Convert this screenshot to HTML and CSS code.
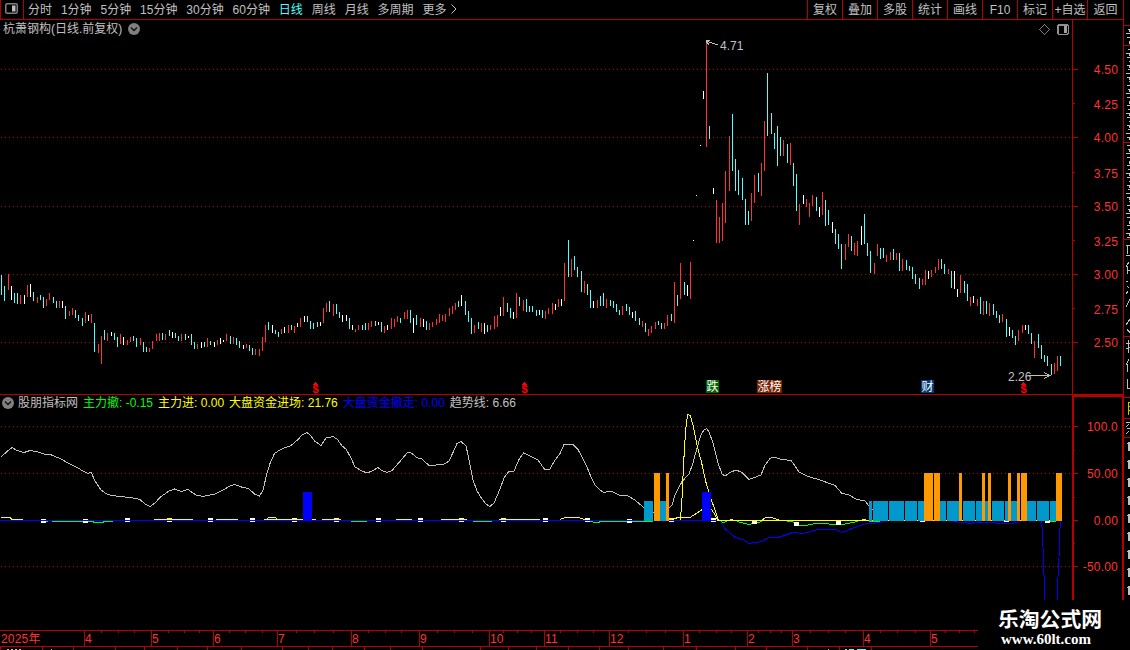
FILE: index.html
```html
<!DOCTYPE html>
<html lang="zh-CN">
<head>
  <meta charset="UTF-8">
  <title>杭萧钢构 - 日线</title>
  <link rel="stylesheet" href="styles.css">
</head>
<body>
<div class="app">
  <div class="main">

    <!-- TOOLBAR -->
    <div class="toolbar">
      <div class="panel-toggle">
        <svg width="13" height="11" viewBox="0 0 13 11"><rect x=".75" y=".75" width="11.5" height="9.5" rx="1.5" fill="none" stroke="#808080" stroke-width="1.5"/><rect x="7" y="2.5" width="3.5" height="6" fill="#c0c0c0"/></svg>
      </div>
      <div class="periods">
        <span>分时</span><span>1分钟</span><span>5分钟</span><span>15分钟</span><span>30分钟</span><span>60分钟</span><span class="active">日线</span><span>周线</span><span>月线</span><span>多周期</span><span>更多</span>
        <svg class="more" width="6" height="10" viewBox="0 0 6 10"><path d="M.5 .5L5 5L.5 9.5" fill="none" stroke="#c0c0c0"/></svg>
      </div>
      <div class="tools">
        <span>复权</span><span>叠加</span><span>多股</span><span>统计</span><span>画线</span><span>F10</span><span>标记</span><span>+自选</span><span class="back">返回</span>
      </div>
    </div>

    <!-- PRICE CHART -->
    <div class="price">
      <div class="title"><span>杭萧钢构(日线.前复权)</span>
        <svg width="12" height="12" viewBox="0 0 12 12"><circle cx="6" cy="6" r="6" fill="#808080"/><path d="M3 4.5L6 7.5L9 4.5" fill="none" stroke="#111" stroke-width="1.4"/></svg>
      </div>
      <svg class="chart" width="1123" height="375" viewBox="0 20 1123 375">
        <path class="grid" d="M1 69.5H1072M1 137.5H1072M1 206.5H1072M1 274.5H1072M1 342.5H1072"/>
        <g id="candles"></g>
        <path class="frame" d="M1072.5 20V394M0 394.5H1123M1073 69.5H1078M1073 137.5H1078M1073 206.5H1078M1073 274.5H1078M1073 342.5H1078M1073 103.5H1075M1073 172.5H1075M1073 240.5H1075M1073 308.5H1075"/>
        <g class="axis">
          <text x="1118" y="74">4.50</text><text x="1118" y="109">4.25</text><text x="1118" y="142">4.00</text>
          <text x="1118" y="178">3.75</text><text x="1118" y="211">3.50</text><text x="1118" y="246">3.25</text>
          <text x="1118" y="279">3.00</text><text x="1118" y="314">2.75</text><text x="1118" y="347">2.50</text>
        </g>
        <!-- high / low -->
        <path class="pointer" d="M706.5 43V40.5H710M707 41.5L718 45M707 42L709 45"/>
        <text class="note" x="720" y="50">4.71</text>
        <path class="pointer" d="M1028 375.5H1050M1044 372.5L1050 375.5L1044 378.5"/>
        <text class="note" x="1008" y="381">2.26</text>
        <!-- top right icons -->
        <path d="M1044.5 24.5L1049.5 29.5L1044.5 34.5L1039.5 29.5Z" fill="none" stroke="#808080"/>
        <rect x="1057.75" y="24.75" width="10.5" height="9.5" rx="1.5" fill="none" stroke="#909090" stroke-width="1.5"/>
        <rect x="1064" y="26" width="3" height="7" fill="#a0a0a0"/>
        <!-- event marks -->
        <g class="mark">
          <path d="M312.5 385L315.5 382L318.5 385ZM521.5 385L524.5 382L527.5 385ZM1020.5 385L1023.5 382L1026.5 385Z"/>
          <text x="315.5" y="393">$</text><text x="524.5" y="393">$</text><text x="1023.5" y="393">$</text>
        </g>
        <rect x="706" y="380" width="13" height="13" fill="#006400"/>
        <rect x="757" y="380" width="25" height="13" fill="#782000"/>
        <rect x="921" y="380" width="13" height="13" fill="#003c78"/>
        <g class="tag"><text x="706.5" y="391">跌</text><text x="757.5" y="391">涨榜</text><text x="921.5" y="391">财</text></g>
      </svg>
    </div>

    <!-- INDICATOR -->
    <div class="indicator">
      <div class="legend">
        <svg width="12" height="12" viewBox="0 0 12 12"><circle cx="6" cy="6" r="6" fill="#808080"/><path d="M3 4.5L6 7.5L9 4.5" fill="none" stroke="#111" stroke-width="1.4"/></svg>
        <span>股朋指标网</span>
        <span class="green">主力撤: -0.15</span>
        <span class="yellow">主力进: 0.00</span>
        <span class="yellow">大盘资金进场: 21.76</span>
        <span class="blue">大盘资金撤走: 0.00</span>
        <span>趋势线: 6.66</span>
      </div>
      <svg class="chart" width="1125" height="235" viewBox="0 395 1125 235">
        <path class="grid" d="M1 426.5H1072M1 473.5H1072M1 566.5H1072"/>
        <polyline class="line trend" points="1,457 7,451.5 12,447.5 17,450.5 24,452.5 30,450.5 36.5,451.5 45.5,454.5 51.5,455 61,459 68,463 78,468 83,471 88,473.5 91,472 95,481 101,490 107.5,494.5 118.5,496.5 131,497.5 140,499.5 145,504 150,506.5 155,503 160.5,497 169,491 174.5,489 181.5,491.5 188,489.5 196,495 203,496.5 215,494 225,489 230,486 235,484.5 241.5,487 248.5,488.5 254.5,494 259.5,496 263,490 267,473 270.5,462 274.5,453.5 280.5,449.5 291,445.5 297.5,440 302,435 307,432.5 311,436 314.5,441 321,445.5 326,438 333,436.5 337.5,439.5 342,446 346,449 351,458 355,467 362,471 367,473 372,471 378,467.5 382,470.5 387,472.5 392,470.5 399,462.5 405,455.5 408,452 412,453.5 416.5,457.5 422,459 429,465.5 443.5,464.5 449,461 453,452.5 457,443.5 461,441.5 466,446 468.5,457 473,480 477,491 482,499 486,504 490,506.5 494,503 500,489 504,478 509,471 514,471 519,459.5 523.5,453 530,456 538,460 545,470 550,469 555,460 560,453.5 564,444.5 573,444.5 578,449.5 583,459 587,467 591,477 595,485 600,490 604,492.5 611,491 619,495 627,495.5 635,500 643,507 648,511 656,513 664,512 669,508 672,505 675,495 682,481.5 689,474 693,463 697,448 701,435 704,430 706.5,428.5 709,432 713,443 718,463 722,474 725,476 730,472.5 736,470 742,472.5 749,479.5 753,478 761,475 765,465 770,458.5 774,457 780,459 791,460.5 795,466 799,472 808,476.5 820,480 835,485.5 842,493.5 848,494.5 857,499.5 865,501 870,507.5 873,510"/>
        <path class="line green" d="M43 521.5H48M52 521.5H93V522.5H103V521.5H113M351 521.5H367M473 521.5H492M589 521.5L597 522.5L602 521.5H653M720 521.5L723 522.5L727 521.5M737 521.5L749 524.5L762 521.5M787 521.5L792 521.5L799 525.5L808 525L815 523.5L842 524.5L858 521.5M869 521.5H880M1049 521.5H1056"/>
        <g id="markers"></g>
        <path class="line blue" d="M0 520.5H720L725 528.5L735 537.5L743 539.5L749 543.5L762 541.5L769 537.5H778L793 532.5L803 533.5L818 529.5H836L842 532.5L853 528L865 524L876 523L883 521.5M953 521.5L971 523.5L976 522.5L1013 523.5L1020 521.5M1041.5 521L1042.5 533L1043.5 561L1044.5 588V600M1060.5 521L1059.5 535L1059 558L1057.5 586V600"/>
        <path class="line yellow" d="M1 517.5H10L12 519.5H23M154 519.5H193M167 518.5H171M216 519.5H238M264 519.5H303M267 518.5L269 517.5H275L277 518.5M312 519.5H316M322 519.5H341M396 519.5H412M441 519.5H467M499 519.5H540M560 519.5L565 517.5H578L585 519.5M669 519.5L679 517.5H690L697 513L703 509L712 510L715 515L718 520.5M680.5 520L682 498L683.7 462L685.5 431.5L687.5 414.5L690.3 415.5L693.3 426.5L697.3 446.5L701.7 463L705.7 481.5L710.7 498L715 510L718.5 520.5H1060M762 520L766 517.5H771L779 520M730 519.5H733M862 519.5H866"/>
        <g id="signals"></g>
        <path class="frame-thick" d="M1073 395V600M1072 396H1124M1123 395V600"/>
        <path class="frame" d="M1074 426.5H1078M1074 473.5H1078M1074 520.5H1078M1074 566.5H1078M1074 450.5H1075M1074 497.5H1075M1074 543.5H1075"/>
        <g class="axis">
          <text x="1118" y="431">100.0</text><text x="1118" y="478">50.00</text>
          <text x="1118" y="525">0.00</text><text x="1118" y="571">-50.00</text>
        </g>
      </svg>
    </div>

    <!-- TIME AXIS -->
    <svg class="time" width="1123" height="20" viewBox="0 630 1123 20">
      <path class="frame" d="M0 630.5H978M0 646.5H978"/>
      <path class="frame" d="M84.5 630V646M151.5 630V646M213.5 630V646M277.5 630V646M351.5 630V646M419.5 630V646M489.5 630V646M544.5 630V646M609.5 630V646M683.5 630V646M747.5 630V646M792.5 630V646M863.5 630V646M930.5 630V646"/>
      <path id="time-ticks" class="frame"/>
      <path d="M7 649.5H9M11 649.5H13M15 649.5H17M19 649.5H21M51 649.5H52M828 649.5H829" stroke="#c0c0c0"/>
      <path d="M845 649.5H847M849 649.5H854M857 649.5H866" stroke="#54fcfc"/>
      <g class="axis left">
        <text x="1" y="643">2025年</text><text x="85" y="643">4</text><text x="152" y="643">5</text><text x="214" y="643">6</text>
        <text x="278" y="643">7</text><text x="352" y="643">8</text><text x="420" y="643">9</text><text x="490" y="643">10</text>
        <text x="545" y="643">11</text><text x="610" y="643">12</text><text x="684" y="643">1</text><text x="748" y="643">2</text>
        <text x="793" y="643">3</text><text x="864" y="643">4</text><text x="931" y="643">5</text>
      </g>
    </svg>
  </div>

  <!-- QUOTE COLUMN, cut off by the window edge -->
  <svg class="side" width="7" height="600" viewBox="1123 0 7 600">
    <path class="frame" d="M1123.5 0V600M1124 25.5H1130M1124 45.5H1130M1124 142.5H1130M1124 239.5H1130M1124 336.5H1130M1124 397.5H1130M1124 418.5H1130M1124 437.5H1130"/>
    <g id="side-rows"></g>
    <path d="M1126 245.5H1130M1127.5 245V254M1126 255.5H1130M1129 262L1126 267M1127.5 266V274M1128 270.5H1130M1126 281.5H1128M1127 286L1129 288M1128 291L1126 294M1130 299L1126 307M1130 319L1126 325M1127 329L1130 333M1126 343.5H1130M1128.5 340V353M1126 349L1130 347M1129 359L1126 365M1127.5 364V372M1127.5 379V389M1127 388.5H1130" fill="none" stroke="#c0c0c0"/>
    <path d="M1130 402.5H1128.5V414.5M1128 406.5H1130M1128 410.5H1130" fill="none" stroke="#c8c800"/>
    <path d="M1126 422.5H1130M1129 424L1126 427M1127 429L1130 428M1129 431L1126 434" fill="none" stroke="#c0c0c0"/>
  </svg>

  <div class="watermark">
    <div class="site">乐淘公式网</div>
    <div class="url">www.60lt.com</div>
  </div>
</div>
<script src="chart.js"></script>
</body>
</html>
```
FILE: styles.css
```css
body {
  margin: 0;
  background: #000;
  color: #c0c0c0;
  font-family: "Liberation Sans", "Noto Sans CJK SC", sans-serif;
  font-size: 12px;
  overflow: hidden;
}

svg {
  display: block;
}

.app {
  position: relative;
  display: flex;
  width: 1130px;
  height: 650px;
  overflow: hidden;
}

.main {
  width: 1123px;
  flex: none;
}

.toolbar {
  display: flex;
  height: 19px;
  line-height: 20px;
  border-bottom: 1px solid #b40000;
  white-space: nowrap;
}

.panel-toggle {
  box-sizing: border-box;
  width: 24px;
  padding: 3px 0 0 4px;
  border-left: 1px solid #b40000;
  border-right: 1px solid #b40000;
}

.periods {
  display: flex;
  flex: 1;
  gap: 8.9px;
  padding-left: 4px;
}

.periods .active {
  color: #54fcfc;
}

.periods .more {
  margin: 4px 0 0 -4px;
}

.tools {
  display: flex;
}

.tools span {
  box-sizing: border-box;
  width: 35px;
  height: 19px;
  border-left: 1px solid #b40000;
  text-align: center;
}

.tools .back {
  width: 36px;
}

.price,
.indicator {
  position: relative;
}

.indicator {
  height: 235px;
}

.title,
.legend {
  position: absolute;
  top: 0;
  display: flex;
  align-items: center;
  white-space: nowrap;
  line-height: 16px;
}

.title {
  left: 3px;
  gap: 6px;
  height: 18px;
}

.legend {
  left: 2px;
  gap: 5px;
  height: 16px;
}

.legend svg {
  margin-right: -1px;
}

.legend .green { color: #00ff00; }
.legend .yellow { color: #ffff00; }
.legend .blue { color: #0000ff; }

.chart {
  overflow: visible;
}

.chart path,
.chart rect,
.side path,
.time path {
  shape-rendering: crispEdges;
}

.grid {
  fill: none;
  stroke: #b40000;
  stroke-dasharray: 1 3;
}

.frame {
  fill: none;
  stroke: #b40000;
}

.frame-thick {
  fill: none;
  stroke: #b40000;
  stroke-width: 2;
}

.axis {
  fill: #ff3232;
  text-anchor: end;
  letter-spacing: 0.2px;
}

.axis.left {
  text-anchor: start;
}

.note {
  fill: #c0c0c0;
}

.pointer {
  fill: none;
  stroke: #c0c0c0;
}

.mark {
  fill: #ff0000;
  font-size: 11px;
  font-weight: bold;
  text-anchor: middle;
}

.tag {
  fill: #fff;
}

.line {
  fill: none;
  shape-rendering: crispEdges;
}

.line.trend { stroke: #c0c0c0; }
.line.green { stroke: #00ff00; }
.line.blue { stroke: #0000ff; }
.line.yellow { stroke: #ffff00; }

.side {
  flex: none;
}

.watermark {
  position: absolute;
  left: 978px;
  top: 600px;
  width: 152px;
  height: 50px;
  background: #000;
  color: #fff;
}

.site {
  padding: 4px 0 0 20px;
  font: bold 20.8px/28px "Noto Sans CJK SC", sans-serif;
}

.url {
  padding-left: 23px;
  font: bold 15px/15px "Liberation Serif", serif;
}
```
FILE: chart.js
```js
const NS = "http://www.w3.org/2000/svg";

function add(parent, x, y, w, h, fill) {
  const r = document.createElementNS(NS, "rect");
  r.setAttribute("x", x);
  r.setAttribute("y", y);
  r.setAttribute("width", w);
  r.setAttribute("height", h);
  r.setAttribute("fill", fill);
  document.getElementById(parent).appendChild(r);
}

// colour (c = down, r = up, w = flat), x, top, bottom
const candles = `
c1,275,295 c4,286,301 r8,274,290 w11,286,300 c14,293,303 c17,293,304 r20,295,304 w24,295,304 r27,285,297 w30,284,297
c33,292,301 r37,297,303 c40,295,300 c43,297,308 r46,299,306 r49,293,300 c53,297,303 c56,301,308 r59,301,308 w62,301,308
c65,306,319 r69,311,316 r72,308,315 c75,310,318 c78,315,321 c82,318,326 r85,312,323 w88,315,321 r91,314,323 c94,323,352
r98,344,353 r101,336,364 c104,330,340 r107,333,341 w111,332,336 c114,333,340 c117,337,347 r120,334,344 w123,337,345 r127,340,345
r130,337,342 c133,336,341 c136,338,347 r140,338,345 c143,342,352 c146,347,352 r149,348,352 r152,341,349 r156,334,341 r159,333,341
c162,333,340 r165,334,340 c169,330,336 w172,332,338 c175,333,338 c178,336,341 r181,334,341 c185,334,340 w188,336,338 c191,334,345
c194,342,349 r197,344,349 w201,342,348 c204,342,347 r207,338,347 c210,341,345 w214,342,347 r217,340,345 w220,338,344 w223,340,342
r226,334,341 c230,336,344 r233,337,344 c236,338,345 c239,341,348 w243,345,349 r246,344,348 c249,345,351 c252,348,355 r255,349,355
r259,349,356 r262,337,351 r265,325,342 c268,322,330 w272,325,333 c275,330,334 c278,332,337 r281,329,334 w284,327,333 r288,325,333
c291,325,330 r294,326,333 w297,323,327 r300,318,327 w304,316,322 c307,316,322 c310,321,329 c313,323,329 c317,322,327 w320,322,326
r323,308,323 r326,303,312 c329,301,312 r333,304,316 c336,304,314 c339,312,318 w342,315,322 w346,315,321 c349,318,329 w352,325,330
r355,329,332 r358,325,330 c362,325,330 c365,323,330 r368,323,330 r371,321,327 c375,321,326 w378,322,325 c381,322,332 r384,326,333
w387,325,330 r391,318,329 r394,319,327 r397,316,322 c400,318,323 r404,312,319 r407,310,319 c410,310,323 w413,318,333 c416,315,325
r420,318,327 w423,319,327 c426,321,330 r429,323,330 r432,322,327 r436,319,325 r439,314,323 r442,315,321 r445,314,322 r449,308,316
r452,306,314 r455,303,310 c458,301,307 w461,295,306 c465,301,315 c468,311,322 c471,318,334 r474,325,333 c478,322,329 r481,323,332
w484,323,334 c487,325,332 r490,325,330 r494,316,329 r497,315,327 w500,307,316 r503,297,316 c507,303,312 c510,308,318 w513,312,319
r516,293,318 c519,297,306 r523,300,311 c526,299,312 c529,306,312 c532,306,312 c536,310,316 w539,310,315 c542,310,318 r545,311,319
r548,308,314 r552,303,314 w555,304,310 r558,299,307 w561,299,306 r564,263,301 c568,240,277 r571,259,277 c574,256,270 c577,267,277
c581,271,292 r584,281,293 c587,284,295 c590,290,308 w593,301,308 r597,300,308 c600,296,306 c603,293,306 r606,299,308 c610,300,306
c613,301,308 c616,304,312 c619,310,315 r622,306,315 c626,304,311 c629,307,315 w632,312,318 c635,311,321 c639,318,325 r642,321,327
c645,323,332 r648,329,336 r651,326,333 r655,322,329 c658,321,325 c661,323,329 r664,323,329 r667,315,326 c671,314,321 r674,282,323
c677,295,306 r680,263,299 c684,282,295 w687,285,296 r690,262,299 w693,240,241 w696,195,196 w700,145,146 w703,91,99 r706,43,147
c709,126,139 w713,188,194 r716,200,243 r719,217,243 r722,203,241 r725,171,223 r729,136,191 c732,114,171 c735,159,191 c738,170,195
c742,178,200 c745,199,225 c748,211,225 r751,193,221 r754,175,203 c758,173,192 r761,163,196 r764,121,171 c767,73,136 c771,113,134
c774,133,149 c777,126,166 c780,137,156 r783,140,156 c787,144,163 r790,143,165 c793,163,186 c796,174,211 r799,204,225 w803,195,204
r806,199,207 r809,203,217 r812,195,206 c816,197,211 w819,207,217 r822,192,215 c825,200,226 c828,210,225 w832,222,233 c835,229,244
c838,234,249 c841,244,269 r845,244,260 r848,234,247 c851,236,251 r854,243,255 r857,241,256 w861,226,245 c864,214,244 c867,243,256
c870,251,273 r874,263,274 r877,244,256 c880,248,259 c883,248,258 r886,255,262 r890,252,260 c893,249,260 r896,253,260 c899,253,271
r902,259,271 c906,260,270 c909,266,271 c912,267,279 c915,274,284 c919,278,289 r922,279,285 r925,270,285 w928,271,279 r931,270,277
r935,267,273 r938,259,270 c941,259,269 c944,264,274 r948,269,274 c951,271,288 w954,271,289 w957,289,297 r960,275,293 c964,281,293
c967,284,301 r970,297,306 w973,296,303 r977,299,306 c980,297,314 r983,301,315 c986,301,314 r989,303,316 c993,304,315 c996,311,318
c999,315,323 r1002,314,322 c1006,319,337 w1009,327,336 c1012,330,338 c1015,336,345 r1018,330,341 r1022,325,333 w1025,325,330
c1028,325,334 c1031,333,344 r1034,341,358 c1038,334,348 c1041,345,359 c1044,355,362 c1047,356,366 c1051,364,375 r1054,363,374
r1057,356,371 c1060,356,366`;

const colours = { c: "#54fcfc", r: "#ff3232", w: "#ffffff" };
candles.trim().split(/\s+/).forEach(item => {
  const [x, top, bottom] = item.slice(1).split(",").map(Number);
  add("candles", x, top, 1, bottom - top, colours[item[0]]);
});

// small white squares on the zero line
[[41, 519], [83, 519], [125, 518], [167, 518], [208, 518], [250, 518], [292, 518], [334, 518], [376, 518], [418, 518], [459, 518],
 [501, 518], [543, 518], [585, 518], [627, 519], [669, 518], [711, 518], [752, 520], [794, 522], [836, 521]].forEach(([x, y]) => {
  add("markers", x, y, 5, 4, "#fff");
});
add("signals", 920, 521, 5, 1, "#fff");
add("signals", 1004, 521, 5, 1, "#fff");
add("signals", 1045, 521, 5, 2, "#fff");

// signal bars: start, end
const teal = [[644, 653], [660, 666], [869, 872], [873, 888], [889, 904], [905, 917], [918, 924], [940, 946], [947, 959],
  [963, 975], [976, 982], [985, 988], [992, 1004], [1005, 1008], [1011, 1017], [1027, 1036], [1037, 1049], [1050, 1056]];
const orange = [[654, 660], [666, 669], [924, 933], [934, 940], [959, 962], [982, 985], [988, 991], [1008, 1011],
  [1017, 1020], [1021, 1027], [1056, 1062]];
teal.forEach(([a, b]) => add("signals", a, 501, b - a, 20, "#0099cc"));
orange.forEach(([a, b]) => add("signals", a, 473, b - a, 48, "#ff9900"));
add("signals", 303, 492, 9, 29, "#0000ff");
add("signals", 702, 492, 9, 29, "#0000ff");

// week ticks hang from the top line, the lower row belongs to the next band
const weeks = [101, 118, 134, 168, 184, 199, 229, 245, 262, 296, 314, 333, 368, 385, 401, 437, 454, 472, 503, 517, 531, 560, 577,
  593, 628, 646, 665, 699, 716, 731, 758, 770, 781, 810, 828, 845, 880, 897, 915, 945, 959, 974];
const lower = [0, 42, 73, 115, 144, 177, 207, 241, 282, 308, 332, 364, 390, 422, 480, 508, 536, 568, 599, 628, 663, 696, 735,
  766, 807, 839, 871];
document.getElementById("time-ticks").setAttribute("d",
  weeks.map(x => `M${x + 0.5} 631v2`).join("") + lower.map(x => `M${x + 0.5} 647v3`).join(""));

// left edges of the clipped quote rows
for (let y = 29; y < 238; y += 4) {
  if (y === 45 || y === 141) continue;
  const i = (y - 29) / 4;
  add("side-rows", 1126 + [2, 0, 1, 3, 1][i % 5], y, 4, 1, "#c0c0c0");
  if (i % 3 === 0) add("side-rows", 1129, y + 1, 1, 2, "#c0c0c0");
}
for (let y = 442; y < 600; y += 18) {
  add("side-rows", 1128, y, 2, 9, "#c0c0c0");
  add("side-rows", 1127, y + 1, 1, 1, "#c0c0c0");
}
```
